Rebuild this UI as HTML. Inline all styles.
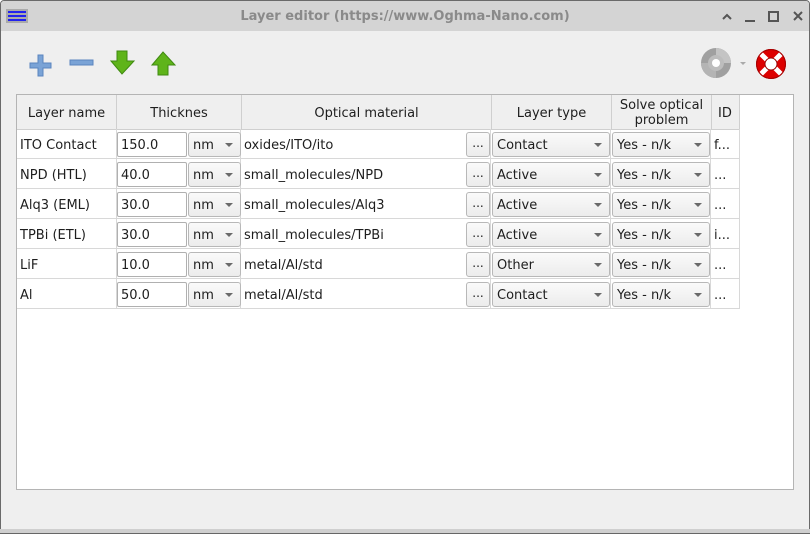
<!DOCTYPE html>
<html><head><style>
*{box-sizing:border-box;margin:0;padding:0}
body{width:810px;height:534px;position:relative;font-family:"DejaVu Sans","Liberation Sans",sans-serif;font-size:13px;color:#1e1e1e;background:#fff;overflow:hidden}
.win{position:absolute;left:0;top:0;width:810px;height:534px;border:1px solid #6a6a6a;border-radius:4px 4px 0 0;background:#efefef;overflow:hidden}
.title{position:absolute;left:0;top:0;width:808px;height:30px;background:#d4d4d4;}
.title .t{position:absolute;left:0;width:808px;top:8px;text-align:center;font-weight:bold;color:#8a8a8a;font-size:13px}
.a{position:absolute}
.tbl{position:absolute;left:15px;top:93px;width:778px;height:396px;background:#fff;border:1px solid #b4b4b4}
.h{position:absolute;top:0;height:35px;background:#efefef;border-right:1px solid #cfcfcf;border-bottom:1px solid #cfcfcf;text-align:center;line-height:37px}
.c{position:absolute;height:30px;border-right:1px solid #d8d8d8;border-bottom:1px solid #d8d8d8;line-height:33px;padding-left:3px;white-space:nowrap;overflow:hidden}
.ed{position:absolute;height:25px;background:#fff;border:1px solid #b0b0b0;border-radius:2px;line-height:25px;padding-left:3px}
.cb{position:absolute;height:25px;background:linear-gradient(#fafafa,#ececec);border:1px solid #b8b8b8;border-radius:3px;line-height:25px;padding-left:4px}
.cb:after{content:"";position:absolute;right:7px;top:10px;border-left:4px solid transparent;border-right:4px solid transparent;border-top:4px solid #6a6a6a}
.bt{position:absolute;height:25px;width:24px;background:linear-gradient(#fafafa,#ececec);border:1px solid #b8b8b8;border-radius:3px;line-height:21px;text-align:center;font-size:12px}
</style></head><body>
<div class="win">
<div class="title"><div class="t">Layer editor (https://www.Oghma-Nano.com)</div>
<div class="a" style="left:5px;top:8px;width:22px;height:14px;background:#aaa;padding:2px"><div style="height:2px;background:#2222ee;margin-bottom:2px"></div><div style="height:2px;background:#2222ee;margin-bottom:2px"></div><div style="height:2px;background:#2222ee"></div></div>
<svg class="a" style="left:718px;top:8px" width="85" height="14" stroke="#555" stroke-width="2" fill="none"><path d="M4 10l4-4 4 4"/><path d="M26 12h10"/><rect x="50" y="3" width="9" height="9"/><path d="M75 3l8 8M83 3l-8 8"/></svg>
</div>
<svg class="a" style="left:28px;top:52px" width="24" height="24"><path d="M9 2h5v8h8v5h-8v8H9v-8H1v-5h8z" fill="#7aa3d6" stroke="#5b85bf"/></svg>
<svg class="a" style="left:68px;top:57px" width="26" height="10"><rect x="1" y="2" width="23" height="5" fill="#7aa3d6" stroke="#5b85bf"/></svg>
<svg class="a" style="left:109px;top:49px" width="26" height="26"><path d="M7 1h10v10h7L12 24 1 11h6z" fill="#5fb41a" stroke="#3f8a10"/></svg>
<svg class="a" style="left:150px;top:49px" width="26" height="26"><path d="M7 25h10V15h7L12 2 1 15h6z" fill="#5fb41a" stroke="#3f8a10"/></svg>
<svg class="a" style="left:699px;top:46px" width="50" height="32"><circle cx="16" cy="16" r="15" fill="#a0a0a0"/><path d="M16 1A15 15 0 0 1 31 16H16z" fill="#c4c4c4"/><path d="M16 31A15 15 0 0 1 1 16H16z" fill="#b4b4b4"/><circle cx="16" cy="16" r="8" fill="#bdbdbd"/><circle cx="16" cy="16" r="4" fill="#fff"/><path d="M40 15l3 3 3-3z" fill="#aaa"/></svg>
<svg class="a" style="left:754px;top:47px" width="32" height="32"><circle cx="16" cy="16" r="14.5" fill="#d00" stroke="#900"/><g stroke="#fff" stroke-width="5"><path d="M16 2v28M2 16h28" transform="rotate(45 16 16)"/></g><circle cx="16" cy="16" r="14.5" fill="none" stroke="#a00"/><circle cx="16" cy="16" r="6" fill="#fff" stroke="#900"/></svg>
<div class="tbl">
<div class="h" style="left:0;width:100px">Layer name</div>
<div class="h" style="left:100px;width:125px">Thicknes</div>
<div class="h" style="left:225px;width:250px">Optical material</div>
<div class="h" style="left:475px;width:120px">Layer type</div>
<div class="h" style="left:595px;width:100px;line-height:15px;padding-top:3px">Solve optical<br>problem</div>
<div class="h" style="left:695px;width:28px;text-align:left;padding-left:6px">ID</div>
</div>
</div>
<div class="a" style="left:0;top:529px;width:810px;height:5px;background:#cfcfcf;border-bottom:1px solid #666"></div>
<div id="rows"></div>
<script>
var d=[["ITO Contact","150.0","oxides/ITO/ito","Contact","f..."],["NPD (HTL)","40.0","small_molecules/NPD","Active","..."],["Alq3 (EML)","30.0","small_molecules/Alq3","Active","..."],["TPBi (ETL)","30.0","small_molecules/TPBi","Active","i..."],["LiF","10.0","metal/Al/std","Other","..."],["Al","50.0","metal/Al/std","Contact","..."]];
var h="";
d.forEach(function(r,i){var y=129+i*30;
h+='<div class="c a" style="left:17px;top:'+y+'px;width:100px">'+r[0]+'</div>';
h+='<div class="c a" style="left:117px;top:'+y+'px;width:124px"></div>';
h+='<div class="c a" style="left:241px;top:'+y+'px;width:250px">'+r[2]+'</div>';
h+='<div class="c a" style="left:491px;top:'+y+'px;width:120px"></div>';
h+='<div class="c a" style="left:611px;top:'+y+'px;width:100px"></div>';
h+='<div class="c a" style="left:711px;top:'+y+'px;width:29px">'+r[4]+'</div>';
h+='<div class="ed" style="left:117px;top:'+(y+3)+'px;width:70px">'+r[1]+'</div>';
h+='<div class="cb" style="left:188px;top:'+(y+3)+'px;width:53px">nm</div>';
h+='<div class="bt" style="left:466px;top:'+(y+3)+'px">...</div>';
h+='<div class="cb" style="left:492px;top:'+(y+3)+'px;width:118px">'+r[3]+'</div>';
h+='<div class="cb" style="left:612px;top:'+(y+3)+'px;width:98px">Yes - n/k</div>';
});
document.getElementById("rows").innerHTML=h;
</script>
</body></html>
